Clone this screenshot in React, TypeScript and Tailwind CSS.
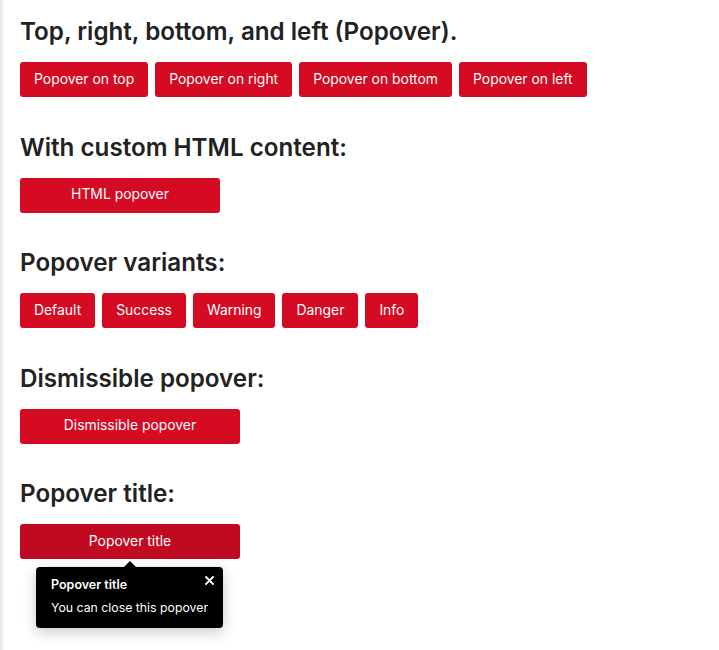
import React from 'react';

const btn =
    'h-[35px] rounded-[3px] bg-[#d50a23] px-[14px] text-[13.9px] text-white leading-none flex items-center justify-center';

const Section: React.FC<{ title: string; children: React.ReactNode }> = ({ title, children }) => (
    <section className="mb-[35.5px]">
        <h2 className="text-[24.2px] leading-[1.2] font-semibold text-[#222] mb-[16px]">{title}</h2>
        {children}
    </section>
);

const App: React.FC = () => {
    return (
        <div className="min-h-[650px] bg-white flex font-['Inter',sans-serif]">
            {/* faint shadow on the left edge */}
            <div className="w-[5px] shrink-0 bg-gradient-to-r from-[#e4e4e4] to-white" />
            <main className="pl-[15px] pt-[17px] flex-1">
                <Section title="Top, right, bottom, and left (Popover).">
                    <div className="flex gap-[7px]">
                        <button className={btn}>Popover on top</button>
                        <button className={btn}>Popover on right</button>
                        <button className={btn}>Popover on bottom</button>
                        <button className={btn}>Popover on left</button>
                    </div>
                </Section>

                <Section title="With custom HTML content:">
                    <button className={`${btn} w-[200px]`}>HTML popover</button>
                </Section>

                <Section title="Popover variants:">
                    <div className="flex gap-[7px]">
                        <button className={btn}>Default</button>
                        <button className={btn}>Success</button>
                        <button className={btn}>Warning</button>
                        <button className={btn}>Danger</button>
                        <button className={btn}>Info</button>
                    </div>
                </Section>

                <Section title="Dismissible popover:">
                    <button className={`${btn} w-[220px]`}>Dismissible popover</button>
                </Section>

                <section>
                    <h2 className="text-[24.2px] leading-[1.2] font-semibold text-[#222] mb-[16px]">Popover title:</h2>
                    <div className="relative w-[220px]">
                        <button className={`${btn} w-[220px] !bg-[#bf0a22]`}>Popover title</button>
                        {/* open popover */}
                        <div className="absolute left-[16px] top-[43px] w-[187px] rounded-[4px] bg-black text-white pl-[15px] pr-[10px] pt-[8px] pb-[12px] shadow-[0_4px_14px_rgba(0,0,0,0.22)]">
                            <div className="absolute -top-[6px] left-[88px] w-0 h-0 border-l-[6px] border-r-[6px] border-b-[6px] border-l-transparent border-r-transparent border-b-black" />
                            <button className="absolute right-[9px] top-[9px] text-white">
                                <svg width="9" height="9" viewBox="0 0 9 9" fill="none" stroke="currentColor" strokeWidth="1.8" strokeLinecap="round">
                                    <path d="M1 1l7 7M8 1L1 8" />
                                </svg>
                            </button>
                            <div className="text-[12.5px] font-semibold leading-[16px] mt-[2px]">Popover title</div>
                            <div className="text-[12.3px] leading-[16px] mt-[7px]">You can close this popover</div>
                        </div>
                    </div>
                </section>
            </main>
        </div>
    );
};

export default App;
